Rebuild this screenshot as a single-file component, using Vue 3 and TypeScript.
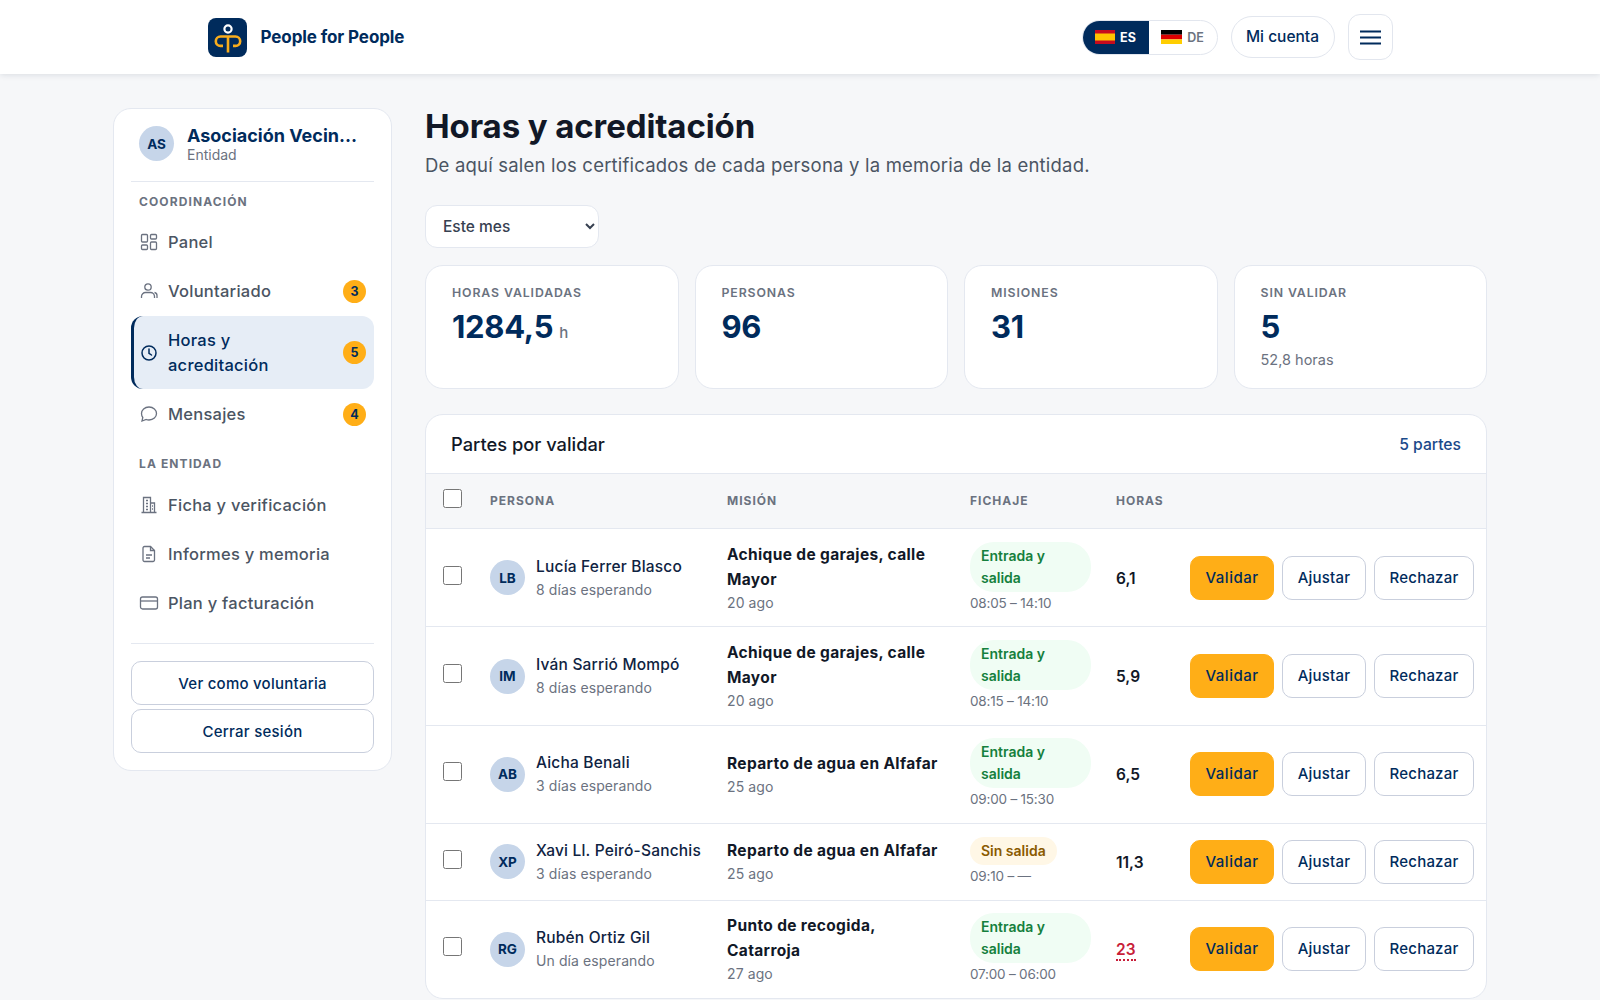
<script setup lang="ts">
interface NavItem {
  label: string
  icon: string
  badge?: number
  active?: boolean
}

interface Parte {
  initials: string
  name: string
  waiting: string
  mission: string
  date: string
  status: string
  warn?: boolean
  time: string
  hours: string
  alert?: boolean
}

const coordination: NavItem[] = [
  { label: 'Panel', icon: 'grid' },
  { label: 'Voluntariado', icon: 'user', badge: 3 },
  { label: 'Horas y acreditación', icon: 'clock', badge: 5, active: true },
  { label: 'Mensajes', icon: 'chat', badge: 4 },
]

const entity: NavItem[] = [
  { label: 'Ficha y verificación', icon: 'building' },
  { label: 'Informes y memoria', icon: 'file' },
  { label: 'Plan y facturación', icon: 'card' },
]

const stats = [
  { label: 'Horas validadas', value: '1284,5', unit: 'h' },
  { label: 'Personas', value: '96' },
  { label: 'Misiones', value: '31' },
  { label: 'Sin validar', value: '5', note: '52,8 horas' },
]

const partes: Parte[] = [
  { initials: 'LB', name: 'Lucía Ferrer Blasco', waiting: '8 días esperando', mission: 'Achique de garajes, calle Mayor', date: '20 ago', status: 'Entrada y salida', time: '08:05 – 14:10', hours: '6,1' },
  { initials: 'IM', name: 'Iván Sarrió Mompó', waiting: '8 días esperando', mission: 'Achique de garajes, calle Mayor', date: '20 ago', status: 'Entrada y salida', time: '08:15 – 14:10', hours: '5,9' },
  { initials: 'AB', name: 'Aicha Benali', waiting: '3 días esperando', mission: 'Reparto de agua en Alfafar', date: '25 ago', status: 'Entrada y salida', time: '09:00 – 15:30', hours: '6,5' },
  { initials: 'XP', name: 'Xavi Ll. Peiró-Sanchis', waiting: '3 días esperando', mission: 'Reparto de agua en Alfafar', date: '25 ago', status: 'Sin salida', warn: true, time: '09:10 – —', hours: '11,3' },
  { initials: 'RG', name: 'Rubén Ortiz Gil', waiting: 'Un día esperando', mission: 'Punto de recogida, Catarroja', date: '27 ago', status: 'Entrada y salida', time: '07:00 – 06:00', hours: '23', alert: true },
]
</script>

<template>
  <div class="page">
    <header class="topbar">
      <div class="topbar-inner">
        <a class="brand">
          <svg class="logo" viewBox="0 0 39 39" width="39" height="39">
            <rect width="39" height="39" rx="8" fill="#002b5c" />
            <circle cx="20" cy="11" r="3.6" fill="none" stroke="#fff" stroke-width="2.2" />
            <path d="M20 18.5V34.5M20 18.5H12.5a4.7 4.7 0 0 0 0 9.4H15M20 18.5H27.5a4.7 4.7 0 0 1 0 9.4H25" fill="none" stroke="#f9ad1c" stroke-width="2.6" />
          </svg>
          <span>People for People</span>
        </a>
        <div class="top-actions">
          <div class="lang">
            <span class="lang-item on">
              <svg viewBox="0 0 20 14" width="20" height="14"><rect width="20" height="14" fill="#c60b1e" /><rect y="3.5" width="20" height="7" fill="#ffc400" /></svg>
              ES
            </span>
            <span class="lang-item">
              <svg viewBox="0 0 21 14" width="21" height="14"><rect width="21" height="4.7" fill="#000" /><rect y="4.7" width="21" height="4.7" fill="#d00" /><rect y="9.4" width="21" height="4.6" fill="#ffce00" /></svg>
              DE
            </span>
          </div>
          <button class="account">Mi cuenta</button>
          <button class="burger" aria-label="Menú">
            <svg viewBox="0 0 21 15" width="21" height="15"><path d="M0 1.5H21M0 7.5H21M0 13.5H21" stroke="#002b5c" stroke-width="2" /></svg>
          </button>
        </div>
      </div>
    </header>

    <div class="layout">
      <aside class="side">
        <div class="org">
          <span class="avatar">AS</span>
          <div class="org-text">
            <strong>Asociación Vecin…</strong>
            <small>Entidad</small>
          </div>
        </div>

        <p class="nav-title">Coordinación</p>
        <nav class="nav">
          <a v-for="item in coordination" :key="item.label" class="nav-item" :class="{ active: item.active }">
            <svg class="ico" viewBox="0 0 20 20" width="20" height="20" fill="none" stroke="currentColor" stroke-width="1.3">
              <template v-if="item.icon === 'grid'">
                <rect x="2.5" y="2.5" width="6" height="7.5" rx="1" />
                <rect x="11.5" y="2.5" width="6" height="4.5" rx="1" />
                <rect x="2.5" y="13" width="6" height="4.5" rx="1" />
                <rect x="11.5" y="10" width="6" height="7.5" rx="1" />
              </template>
              <template v-else-if="item.icon === 'user'">
                <circle cx="9" cy="6" r="3.2" />
                <path d="M2.5 17v-1.5a4 4 0 0 1 4-4h5a4 4 0 0 1 4 4V17M15.5 11.5a3 3 0 0 1 2.5 3V17" />
              </template>
              <template v-else-if="item.icon === 'clock'">
                <circle cx="10" cy="10" r="7" stroke-width="1.5" />
                <path d="M10 6v4.3l2.5 1.7" stroke-width="1.5" stroke-linecap="round" />
              </template>
              <template v-else>
                <path d="M10 3c4.4 0 7.5 2.9 7.5 6.5S14.4 16 10 16c-1 0-2-.2-2.8-.5L3 17l.8-3.5C3 12.4 2.5 11 2.5 9.5 2.5 5.9 5.6 3 10 3Z" />
              </template>
            </svg>
            <span class="nav-label">{{ item.label }}</span>
            <span v-if="item.badge" class="badge">{{ item.badge }}</span>
          </a>
        </nav>

        <p class="nav-title second">La entidad</p>
        <nav class="nav">
          <a v-for="item in entity" :key="item.label" class="nav-item">
            <svg class="ico" viewBox="0 0 20 20" width="20" height="20" fill="none" stroke="currentColor" stroke-width="1.3">
              <template v-if="item.icon === 'building'">
                <path d="M2.5 17.5h15M4.5 17.5V2.5h7v15M11.5 8h4v9.5" />
                <path d="M7 5.5h2M7 8.5h2M7 11.5h2M7 14.5h2M13 11h1M13 14h1" />
              </template>
              <template v-else-if="item.icon === 'file'">
                <path d="M5.5 2.5h6l4 4V16a1.5 1.5 0 0 1-1.5 1.5H5.5A1.5 1.5 0 0 1 4 16V4a1.5 1.5 0 0 1 1.5-1.5Z" />
                <path d="M11.5 2.5v4h4M7 11h6M7 14h4" />
              </template>
              <template v-else>
                <rect x="1.5" y="4" width="17" height="12" rx="2" />
                <path d="M1.5 8h17" />
              </template>
            </svg>
            <span class="nav-label">{{ item.label }}</span>
          </a>
        </nav>

        <div class="side-foot">
          <button class="btn-ghost">Ver como voluntaria</button>
          <button class="btn-ghost">Cerrar sesión</button>
        </div>
      </aside>

      <main class="main">
        <h1>Horas y acreditación</h1>
        <p class="lead">De aquí salen los certificados de cada persona y la memoria de la entidad.</p>

        <select class="period">
          <option>Este mes</option>
        </select>

        <section class="stats">
          <div v-for="s in stats" :key="s.label" class="stat">
            <span class="stat-label">{{ s.label }}</span>
            <span class="stat-value">{{ s.value }}<small v-if="s.unit">{{ s.unit }}</small></span>
            <span v-if="s.note" class="stat-note">{{ s.note }}</span>
          </div>
        </section>

        <section class="panel">
          <div class="panel-head">
            <h2>Partes por validar</h2>
            <span>5 partes</span>
          </div>
          <table>
            <colgroup>
              <col class="c-check" />
              <col class="c-person" />
              <col class="c-mission" />
              <col class="c-clock" />
              <col class="c-hours" />
              <col />
            </colgroup>
            <thead>
              <tr>
                <th class="cb-cell"><input type="checkbox" /></th>
                <th>Persona</th>
                <th>Misión</th>
                <th>Fichaje</th>
                <th>Horas</th>
                <th></th>
              </tr>
            </thead>
            <tbody>
              <tr v-for="p in partes" :key="p.initials">
                <td class="cb-cell"><input type="checkbox" /></td>
                <td>
                  <div class="person">
                    <span class="avatar">{{ p.initials }}</span>
                    <div>
                      <div class="person-name">{{ p.name }}</div>
                      <div class="muted">{{ p.waiting }}</div>
                    </div>
                  </div>
                </td>
                <td>
                  <div class="mission">{{ p.mission }}</div>
                  <div class="muted">{{ p.date }}</div>
                </td>
                <td>
                  <span class="pill" :class="{ warn: p.warn }">{{ p.status }}</span>
                  <div class="time">{{ p.time }}</div>
                </td>
                <td>
                  <span class="hours" :class="{ alert: p.alert }">{{ p.hours }}</span>
                </td>
                <td>
                  <div class="actions">
                    <button class="act primary">Validar</button>
                    <button class="act">Ajustar</button>
                    <button class="act wide">Rechazar</button>
                  </div>
                </td>
              </tr>
            </tbody>
          </table>
        </section>
      </main>
    </div>
  </div>
</template>

<style scoped>
.page {
  font-family: Inter, "Noto Sans", sans-serif;
  color: #111827;
}

.topbar {
  background: #fff;
  height: 74px;
  box-shadow: 0 1px 6px rgba(15, 30, 60, 0.12);
}

.topbar-inner {
  max-width: 1185px;
  height: 100%;
  margin: 0 auto;
  display: flex;
  align-items: center;
  justify-content: space-between;
}

.brand {
  display: flex;
  align-items: center;
  gap: 14px;
  font-size: 17px;
  font-weight: 700;
  letter-spacing: -0.1px;
  color: #002b5c;
}

.logo {
  display: block;
}

.top-actions {
  display: flex;
  align-items: center;
  gap: 13px;
}

.lang {
  display: flex;
  height: 35px;
  border: 1px solid #e2e6ee;
  border-radius: 999px;
  overflow: hidden;
  box-sizing: border-box;
  width: 136px;
}

.lang-item {
  display: flex;
  align-items: center;
  justify-content: center;
  gap: 5px;
  flex: 1;
  font-size: 12.5px;
  font-weight: 600;
  color: #6b7280;
}

.lang-item.on {
  flex: 0 0 66px;
  background: #002b5c;
  color: #fff;
  font-weight: 700;
}

.account {
  width: 104px;
  height: 42px;
  padding-bottom: 2px;
  background: #fff;
  border: 1px solid #e2e6ee;
  border-radius: 999px;
  font: 500 15.5px Inter, sans-serif;
  color: #002b5c;
}

.burger {
  width: 45px;
  height: 46px;
  display: flex;
  align-items: center;
  justify-content: center;
  background: #fff;
  border: 1px solid #e2e6ee;
  border-radius: 12px;
}

.layout {
  width: 1374px;
  margin: 0 auto;
  padding-top: 34px;
  display: grid;
  grid-template-columns: 279px 1062px;
  gap: 33px;
  align-items: start;
}

.side {
  background: #fff;
  border: 1px solid #e4e8f0;
  border-radius: 18px;
  padding: 16px 17px 17px;
  box-sizing: border-box;
}

.org {
  display: flex;
  align-items: center;
  gap: 13px;
  padding: 0 8px 19px;
  border-bottom: 1px solid #e4e8f0;
}

.avatar {
  flex: none;
  width: 35px;
  height: 35px;
  display: flex;
  align-items: center;
  justify-content: center;
  border-radius: 50%;
  background: #c6d5e9;
  color: #002b5c;
  font-size: 13.5px;
  font-weight: 700;
}

.org-text {
  min-width: 0;
}

.org-text strong {
  display: block;
  font-size: 18px;
  line-height: 22px;
  font-weight: 700;
  color: #002b5c;
  white-space: nowrap;
}

.org-text small {
  display: block;
  font-size: 14px;
  line-height: 15px;
  color: #6b7280;
}

.nav-title {
  margin: 13px 8px 9px;
  font-size: 12px;
  line-height: 14px;
  font-weight: 700;
  letter-spacing: 1.1px;
  text-transform: uppercase;
  color: #6b7280;
}

.nav-title.second {
  margin-top: 19px;
  margin-bottom: 10px;
}

.nav {
  display: flex;
  flex-direction: column;
  gap: 1px;
}

.nav-item {
  display: flex;
  align-items: center;
  gap: 9px;
  padding: 11.5px 8px;
  font-size: 16.5px;
  line-height: 25px;
  letter-spacing: 0.25px;
  font-weight: 500;
  color: #4b5563;
  border-radius: 12px;
}

.nav-label {
  flex: 1;
}

.ico {
  flex: none;
  color: #6b7280;
}

.nav-item.active {
  background: #e6edf6;
  color: #002b5c;
  border-left: 3px solid #002b5c;
  padding-left: 5px;
}

.nav-item.active .ico {
  color: #002b5c;
}

.badge {
  flex: none;
  width: 23px;
  height: 23px;
  display: flex;
  align-items: center;
  justify-content: center;
  border-radius: 50%;
  background: #ffae17;
  color: #002b5c;
  font-size: 12.5px;
  font-weight: 700;
  letter-spacing: 0;
}

.side-foot {
  margin-top: 16px;
  padding-top: 17px;
  border-top: 1px solid #e4e8f0;
  display: flex;
  flex-direction: column;
  gap: 4px;
}

.btn-ghost {
  height: 44px;
  background: #fff;
  border: 1px solid #c9cfdd;
  border-radius: 10px;
  font: 500 15px Inter, sans-serif;
  letter-spacing: 0.25px;
  color: #002b5c;
}

h1 {
  margin: 0;
  font-size: 33px;
  line-height: 36px;
  font-weight: 700;
  letter-spacing: -0.1px;
  color: #111827;
}

.lead {
  margin: 8px 0 0;
  font-size: 18.5px;
  line-height: 26px;
  letter-spacing: 0.2px;
  font-weight: 400;
  color: #4b5563;
}

.period {
  display: block;
  margin-top: 27px;
  width: 174px;
  height: 43px;
  padding: 0 13px;
  background: #fff;
  border: 1px solid #e4e8f0;
  border-radius: 12px;
  font: 500 15.5px Inter, sans-serif;
  color: #374151;
}

.stats {
  margin-top: 17px;
  display: grid;
  grid-template-columns: repeat(4, 1fr);
  gap: 16px;
}

.stat {
  height: 124px;
  box-sizing: border-box;
  padding: 18px 26px;
  background: #fff;
  border: 1px solid #e4e8f0;
  border-radius: 18px;
  display: flex;
  flex-direction: column;
}

.stat-label {
  font-size: 12.3px;
  line-height: 18px;
  font-weight: 600;
  letter-spacing: 0.9px;
  text-transform: uppercase;
  color: #6b7280;
}

.stat-value {
  margin-top: 5px;
  font-size: 31px;
  line-height: 40px;
  font-weight: 700;
  letter-spacing: -0.3px;
  color: #002b5c;
}

.stat-value small {
  margin-left: 6px;
  font-size: 15px;
  font-weight: 500;
  color: #6b7280;
}

.stat-note {
  margin-top: 2px;
  font-size: 14.5px;
  line-height: 22px;
  color: #6b7280;
}

.panel {
  margin-top: 25px;
  background: #fff;
  border: 1px solid #e4e8f0;
  border-radius: 18px;
  overflow: hidden;
}

.panel-head {
  height: 58px;
  padding: 0 25px;
  display: flex;
  align-items: center;
  justify-content: space-between;
  font-size: 15.7px;
  font-weight: 500;
  color: #1b4a8a;
}

.panel-head h2 {
  margin: 0;
  font-size: 18.3px;
  font-weight: 500;
  color: #111827;
}

table {
  width: 100%;
  table-layout: fixed;
  border-collapse: collapse;
}

.c-check {
  width: 64px;
}

.c-person {
  width: 237px;
}

.c-mission {
  width: 243px;
}

.c-clock {
  width: 146px;
}

.c-hours {
  width: 74px;
}

th {
  height: 52px;
  padding: 0 0 2px;
  background: #f6f7f9;
  border-top: 1px solid #e4e8f0;
  text-align: left;
  font-size: 12px;
  font-weight: 700;
  letter-spacing: 1px;
  text-transform: uppercase;
  color: #6b7280;
}

td {
  padding: 12.7px 0;
  border-top: 1px solid #e4e8f0;
  vertical-align: middle;
}

.cb-cell {
  padding-left: 17px;
}

th.cb-cell {
  padding-bottom: 0;
}

input[type="checkbox"] {
  display: block;
  width: 19px;
  height: 19px;
  margin: 0 0 5px;
}

.person {
  display: flex;
  align-items: center;
  gap: 11px;
}

.person-name {
  font-size: 15.5px;
  line-height: 24px;
  letter-spacing: 0.2px;
  font-weight: 500;
  color: #0f2342;
}

.muted {
  font-size: 14px;
  line-height: 22px;
  letter-spacing: 0.1px;
  color: #6b7280;
}

.time {
  font-size: 13.5px;
  line-height: 22px;
  letter-spacing: -0.2px;
  color: #6b7280;
}

.mission {
  padding-right: 26px;
  font-size: 15.5px;
  line-height: 25px;
  letter-spacing: 0.35px;
  font-weight: 700;
  color: #111827;
}

.pill {
  display: inline-block;
  width: 121px;
  box-sizing: border-box;
  padding: 3px 42px 3px 11px;
  background: #f0fdf4;
  border-radius: 24px;
  font-size: 14px;
  line-height: 22px;
  font-weight: 600;
  color: #15803d;
  vertical-align: top;
}

.pill.warn {
  width: auto;
  padding-right: 11px;
  background: #fff7e6;
  color: #8a5a00;
}

.hours {
  font-size: 15.5px;
  font-weight: 600;
  color: #111827;
}

.hours.alert {
  color: #c81e3a;
  border-bottom: 2px dotted #c81e3a;
}

.actions {
  display: flex;
  gap: 8px;
}

.act {
  width: 84px;
  height: 44px;
  padding-bottom: 2px;
  background: #fff;
  border: 1px solid #c9cfdd;
  border-radius: 10px;
  font: 500 15px Inter, sans-serif;
  letter-spacing: 0.2px;
  color: #002b5c;
}

.act.wide {
  width: 100px;
}

.act.primary {
  background: #ffae17;
  border-color: #ffae17;
  letter-spacing: 0.5px;
}
</style>

<style>
body {
  background: #f6f7f9;
}
</style>
